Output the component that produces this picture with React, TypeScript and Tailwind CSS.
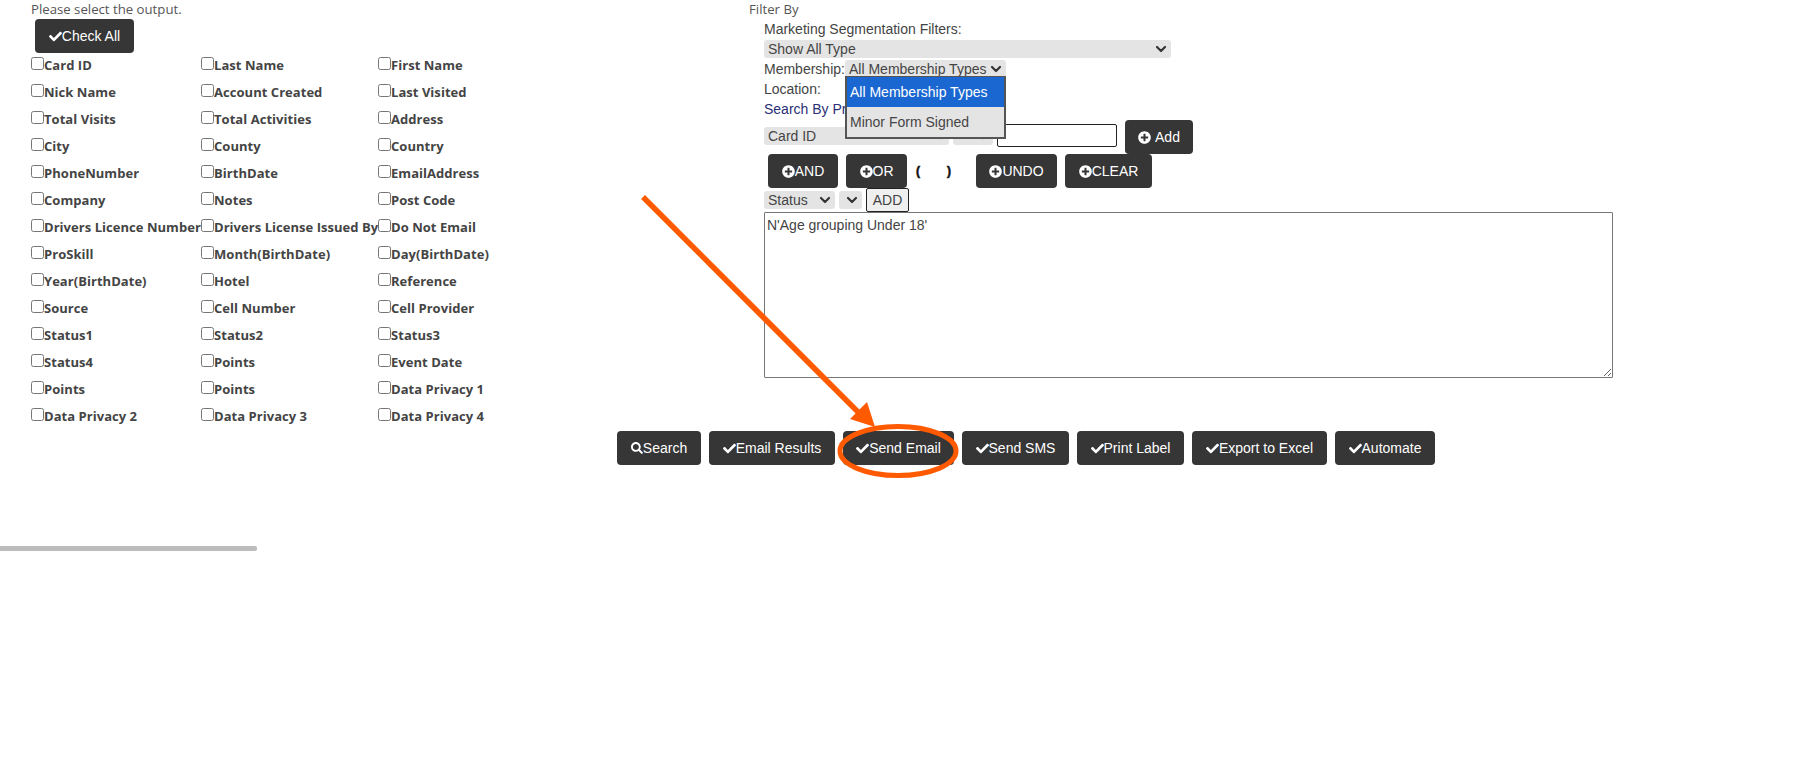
import { ChevronDown } from "lucide-react";
import { FaCheck, FaPlusCircle, FaSearch } from "react-icons/fa";

const fields = [
  "Card ID", "Last Name", "First Name",
  "Nick Name", "Account Created", "Last Visited",
  "Total Visits", "Total Activities", "Address",
  "City", "County", "Country",
  "PhoneNumber", "BirthDate", "EmailAddress",
  "Company", "Notes", "Post Code",
  "Drivers Licence Number", "Drivers License Issued By", "Do Not Email",
  "ProSkill", "Month(BirthDate)", "Day(BirthDate)",
  "Year(BirthDate)", "Hotel", "Reference",
  "Source", "Cell Number", "Cell Provider",
  "Status1", "Status2", "Status3",
  "Status4", "Points", "Event Date",
  "Points", "Points", "Data Privacy 1",
  "Data Privacy 2", "Data Privacy 3", "Data Privacy 4",
];

function Select({
  label = "",
  className = "",
}: {
  label?: string;
  className?: string;
}) {
  return (
    <div className={`relative shrink-0 ${className}`}>
      <select className="block h-[18px] w-full appearance-none rounded-[3px] border-0 bg-[#e4e4e4] pl-[4px] text-[14px] leading-[18px] text-[#444]">
        <option>{label}</option>
      </select>
      <ChevronDown
        strokeWidth={3.2}
        className="pointer-events-none absolute top-[1px] right-[2px] h-[16px] w-[16px] text-[#333]"
      />
    </div>
  );
}

function DarkButton({
  children,
  className = "",
}: {
  children: React.ReactNode;
  className?: string;
}) {
  return (
    <button
      className={`flex h-[34px] items-center justify-center rounded-[4px] bg-[#363636] text-[14px] text-white ${className}`}
    >
      {children}
    </button>
  );
}

function CheckIcon() {
  return <FaCheck className="h-[13px] w-[13px] shrink-0" />;
}

function PlusIcon() {
  return <FaPlusCircle className="h-[13px] w-[13px] shrink-0" />;
}

function OutputColumn() {
  return (
    <div className="w-[749px] shrink-0 pl-[31px]">
      <p className="h-[19px] font-['Open_Sans',sans-serif] text-[13.2px] leading-[19px] text-[#555]">
        Please select the output.
      </p>
      <DarkButton className="ml-[4px] w-[99px]">
        <CheckIcon />
        Check All
      </DarkButton>
      <div className="grid grid-cols-[170px_177px_200px]">
        {fields.map((field, i) => (
          <label
            key={i}
            className="flex h-[27px] items-start font-['Open_Sans',sans-serif] text-[13px] leading-[24px] font-bold tracking-[0.04px] whitespace-nowrap text-[#444]"
          >
            <input type="checkbox" className="mt-[4px] h-[13px] w-[13px] shrink-0" />
            {field}
          </label>
        ))}
      </div>
    </div>
  );
}

function FilterColumn() {
  return (
    <div className="min-w-0 flex-1 text-[14px] text-[#444]">
      <p className="h-[19px] font-['Open_Sans',sans-serif] text-[13.2px] leading-[19px] text-[#555]">
        Filter By
      </p>
      <div className="pl-[15px]">
        <p className="h-[21px] leading-[20px]">Marketing Segmentation Filters:</p>
        <Select label="Show All Type" className="w-[407px]" />
        <div className="mt-[2px] flex h-[19px] items-start">
          <span className="w-[81px] leading-[18px]">Membership:</span>
          <div className="relative">
            <Select label="All Membership Types" className="w-[161px]" />
            <div className="absolute top-[16px] left-0 z-10 w-[161px] border-x-2 border-t border-b-2 border-[#555] bg-[#e4e4e4]">
              <div className="flex h-[30px] items-center bg-[#1a67d2] pl-[3px] text-white">
                All Membership Types
              </div>
              <div className="flex h-[30px] items-center pl-[3px]">Minor Form Signed</div>
            </div>
          </div>
        </div>
        <p className="h-[20px] leading-[20px]">Location:</p>
        <p className="h-[21px] leading-[20px] text-[#2b2f77]">Search By Property</p>
        <div className="flex h-[34px] items-start">
          <Select label="Card ID" className="mt-[7px] w-[185px]" />
          <Select className="mt-[7px] ml-[4px] w-[40px]" />
          <input
            type="text"
            className="mt-[4px] ml-[4px] h-[23px] w-[120px] rounded-[2px] border border-[#222] bg-white"
          />
          <DarkButton className="ml-[8px] w-[68px] gap-[4px]">
            <PlusIcon />
            Add
          </DarkButton>
        </div>
        <div className="flex h-[34px] items-center pl-[4px]">
          <DarkButton className="w-[70px]">
            <PlusIcon />
            AND
          </DarkButton>
          <DarkButton className="ml-[8px] w-[61px]">
            <PlusIcon />
            OR
          </DarkButton>
          <span className="ml-[9px] w-[31px] text-[12px] font-bold text-[#111] [-webkit-text-stroke:0.5px_#111]">(</span>
          <span className="w-[29px] text-[12px] font-bold text-[#111] [-webkit-text-stroke:0.5px_#111]">)</span>
          <DarkButton className="w-[81px]">
            <PlusIcon />
            UNDO
          </DarkButton>
          <DarkButton className="ml-[8px] w-[87px]">
            <PlusIcon />
            CLEAR
          </DarkButton>
        </div>
        <div className="flex h-[24px] items-start">
          <Select label="Status" className="mt-[3px] w-[71px]" />
          <Select className="mt-[3px] ml-[4px] w-[23px]" />
          <button className="ml-[4px] h-[24px] w-[43px] rounded-[2px] border border-[#222] bg-[#efefef] text-[14px] leading-[20px] text-[#444]">
            ADD
          </button>
        </div>
        <textarea
          readOnly
          value="N'Age grouping Under 18'"
          className="block h-[166px] w-[849px] rounded-[1px] border border-[#767676] bg-white px-[2px] pt-[3px] pb-[2px] text-[14px] leading-[18px] text-[#444]"
        />
      </div>
    </div>
  );
}

export default function App() {
  const actions = [
    { label: "Email Results", width: "w-[126px]" },
    { label: "Send Email", width: "w-[111px]" },
    { label: "Send SMS", width: "w-[107px]" },
    { label: "Print Label", width: "w-[107px]" },
    { label: "Export to Excel", width: "w-[135px]" },
    { label: "Automate", width: "w-[100px]" },
  ];

  return (
    <div className="relative h-[777px] w-[1797px] overflow-hidden bg-white font-['Liberation_Sans',Arial,sans-serif]">
      <div className="flex">
        <OutputColumn />
        <FilterColumn />
      </div>

      <div className="flex gap-[8px] pl-[617px]">
        <DarkButton className="w-[84px]">
          <FaSearch className="h-[12px] w-[12px] shrink-0" />
          Search
        </DarkButton>
        {actions.map((action) => (
          <DarkButton key={action.label} className={action.width}>
            <CheckIcon />
            {action.label}
          </DarkButton>
        ))}
      </div>

      <div className="mt-[81px] h-[5px] w-[257px] rounded-r-[2px] bg-[#bcbcbc]" />

      {/* annotation on top of the screenshot */}
      <svg
        className="pointer-events-none absolute top-0 left-0 z-20"
        width="1797"
        height="777"
        viewBox="0 0 1797 777"
      >
        <line x1="643" y1="197" x2="862" y2="416" stroke="#ff5a00" strokeWidth="5.5" />
        <polygon points="867,402 850,419 875,427" fill="#ff5a00" />
        <ellipse cx="898" cy="451" rx="58" ry="24.5" fill="none" stroke="#ff5a00" strokeWidth="5" />
      </svg>
    </div>
  );
}
